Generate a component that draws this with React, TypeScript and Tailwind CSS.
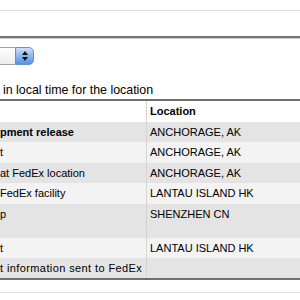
const rows = [
  { activity: "pment release", location: "ANCHORAGE, AK", bold: true, h: "h-[20px]", bg: "bg-[#e4e4e4]" },
  { activity: "t", location: "ANCHORAGE, AK", h: "h-[21px]", bg: "bg-[#f3f3f3]" },
  { activity: "at FedEx location", location: "ANCHORAGE, AK", h: "h-[20px]", bg: "bg-[#e4e4e4]" },
  { activity: "FedEx facility", location: "LANTAU ISLAND HK", h: "h-[21px]", bg: "bg-[#f3f3f3]" },
  { activity: "p", location: "SHENZHEN CN", h: "h-[34px]", bg: "bg-[#e4e4e4]" },
  { activity: "t", location: "LANTAU ISLAND HK", h: "h-[20px]", bg: "bg-[#f3f3f3]" },
  { activity: "t information sent to FedEx", location: "", h: "h-[20px]", bg: "bg-[#e4e4e4]", wide: true },
];

const SelectBox = () => (
  <div className="flex h-[18px] w-[34px]">
    <div className="w-[15px] border-y border-[#a0a0a0] bg-gradient-to-b from-white to-[#ececec]" />
    <div className="flex w-[19px] flex-col items-center justify-center gap-[2px] rounded-r-[5px] border border-[#6b8fc8] bg-gradient-to-b from-[#cfe0fb] via-[#8db5f0] to-[#5b92e6]">
      <svg width="6" height="4" viewBox="0 0 6 4">
        <path d="M3 0 L6 4 L0 4 Z" fill="#111" />
      </svg>
      <svg width="6" height="4" viewBox="0 0 6 4">
        <path d="M0 0 L6 0 L3 4 Z" fill="#111" />
      </svg>
    </div>
  </div>
);

export default function App() {
  return (
    <div className="h-[300px] w-[300px] overflow-hidden bg-white font-['Liberation_Sans',Arial,sans-serif] text-black">
      <div className="mt-[10px] h-px bg-[#dedede]" />
      <div className="mt-[25px] h-[2px] bg-[#767676]" />
      <div className="h-px bg-[#c9c9c9]" />

      <div className="mt-[8px]">
        <SelectBox />
      </div>

      <p className="mt-[18px] pl-[3px] text-[12.4px] leading-[14px]">in local time for the location</p>

      <div className="mt-[2px] border-y-2 border-[#6f6f6f] text-[11px] leading-[14px]">
        <div className="flex h-[21px] bg-white">
          <div className="w-[147px] border-r border-[#d4d4d4]" />
          <div className="pl-[3px] pt-[3px] font-bold">Location</div>
        </div>
        {rows.map((row, i) => (
          <div key={i} className={`flex ${row.h} ${row.bg}`}>
            <div
              className={`w-[147px] whitespace-nowrap border-r border-[#d4d4d4] pt-[3px] ${row.bold ? "font-bold" : ""} ${row.wide ? "tracking-[0.4px]" : ""}`}
            >
              {row.activity}
            </div>
            <div className="whitespace-nowrap pl-[3px] pt-[3px]">{row.location}</div>
          </div>
        ))}
      </div>

      <div className="mt-[12px] h-px bg-[#dedede]" />
    </div>
  );
}
